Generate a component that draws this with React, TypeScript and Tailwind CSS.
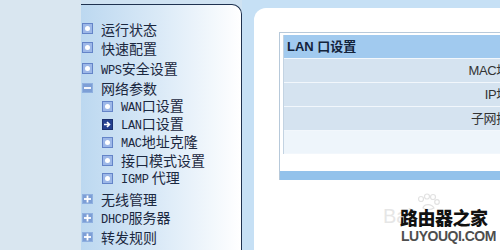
import React from 'react';

type Kind = 'dot' | 'minus' | 'plus' | 'arrow';

interface MenuItem {
  label: React.ReactNode;
  kind: Kind;
  sub?: boolean;
  gap?: boolean;
}

const Lat: React.FC<{ children: React.ReactNode }> = ({ children }) => (
  <span className="font-['Liberation_Mono',monospace] text-[12px] tracking-[-0.3px]">{children}</span>
);

const menu: MenuItem[] = [
  { label: '运行状态', kind: 'dot' },
  { label: '快速配置', kind: 'dot' },
  { label: <><Lat>WPS</Lat>安全设置</>, kind: 'dot', gap: true },
  { label: '网络参数', kind: 'minus' },
  { label: <><Lat>WAN</Lat>口设置</>, kind: 'dot', sub: true },
  { label: <><Lat>LAN</Lat>口设置</>, kind: 'arrow', sub: true },
  { label: <><Lat>MAC</Lat>地址克隆</>, kind: 'dot', sub: true },
  { label: '接口模式设置', kind: 'dot', sub: true },
  { label: <><Lat>IGMP</Lat>&nbsp;代理</>, kind: 'dot', sub: true },
  { label: '无线管理', kind: 'plus', gap: true },
  { label: <><Lat>DHCP</Lat>服务器</>, kind: 'plus' },
  { label: '转发规则', kind: 'plus' },
];

const MenuIcon: React.FC<{ kind: Kind }> = ({ kind }) => {
  if (kind === 'arrow') {
    return (
      <span className="w-[11px] h-[11px] shrink-0 bg-[#233f8f] border border-[#1a2f6e] flex items-center justify-center">
        <svg width="9" height="9" viewBox="0 0 9 9">
          <path d="M1 4.5h5.5M4 2l2.5 2.5L4 7" stroke="#fff" strokeWidth="1.6" fill="none" />
        </svg>
      </span>
    );
  }
  if (kind === 'minus' || kind === 'plus') {
    return (
      <span className="w-[11px] h-[10px] shrink-0 bg-[#7d9fd6] border border-[#8fb0e0] flex items-center justify-center">
        <svg width="9" height="8" viewBox="0 0 9 8">
          <path d="M1 4h7" stroke="#fff" strokeWidth="1.8" />
          {kind === 'plus' && <path d="M4.5 0.5v7" stroke="#fff" strokeWidth="1.8" />}
        </svg>
      </span>
    );
  }
  return (
    <span className="w-[11px] h-[11px] shrink-0 bg-[#9db8e8] border border-[#6484c8] flex items-center justify-center">
      <span className="w-[5px] h-[5px] rounded-full bg-white" />
    </span>
  );
};

const rows = ['MAC地址：', 'IP地址：', '子网掩码：'];

export default function App() {
  return (
    <div className="relative w-[500px] h-[250px] overflow-hidden flex bg-[#d9e6f0] font-['Noto_Sans_CJK_SC',sans-serif]">
      {/* left blank */}
      <div className="w-[81px] shrink-0" />

      {/* menu panel */}
      <div className="w-[161px] shrink-0 pt-[4px] bg-[#cfe2f2]">
        <div className="h-full border-t border-r border-[#1f3250] rounded-tr-[10px] bg-linear-to-r from-[#bcd8f0] via-[#dbeaf7] to-white pt-[14px]">
          {menu.map((m, i) => (
            <div
              key={i}
              className={`flex items-center text-[14px] leading-none text-[#1b2840] ${m.sub ? 'h-[18px] pl-[21px]' : 'h-[19px] pl-[1px]'} ${m.gap ? 'mt-[2px]' : ''}`}
            >
              <MenuIcon kind={m.kind} />
              <span className={`whitespace-nowrap ${m.sub ? 'ml-[8px]' : 'ml-[8px]'}`}>{m.label}</span>
            </div>
          ))}
        </div>
      </div>

      {/* right side */}
      <div className="flex-1 bg-[#c6e0f5] pt-[8px] pl-[12px] min-w-0">
        <div className="h-full bg-white rounded-tl-[12px] pt-[24px] pl-[25px] overflow-hidden">
          <div className="w-[420px] border-l border-t border-[#b7c9da]">
            <div className="pt-[2px] pl-[3px] pb-[17px]">
              <div className="border-l border-[#c3d3e2] text-[13px]">
                <div className="h-[23px] bg-[#a1caef] flex items-center pl-[3px] font-bold text-[#13233b] font-['Liberation_Sans','Noto_Sans_CJK_SC',sans-serif]">
                  LAN 口设置
                </div>
                {rows.map((r) => (
                  <div key={r} className="h-[24px] border-t border-[#f2f7fc] bg-[#d5e3f0] flex items-center">
                    <div className="w-[250px] text-right text-[#333] font-['Liberation_Sans','Noto_Sans_CJK_SC',sans-serif] tracking-[-0.4px] whitespace-nowrap">
                      {r}
                    </div>
                  </div>
                ))}
                <div className="h-[24px] border-t border-[#f2f7fc] bg-[#eef5fb] border-b border-[#c8d6e3]" />
              </div>
            </div>
            <div className="h-[9px] bg-[#93c2eb]" />
          </div>
        </div>
      </div>

      {/* watermark */}
      <div className="absolute left-[383px] top-[193px] w-[117px] h-[57px] pointer-events-none">
        <svg className="absolute left-[32px] top-[0px]" width="26" height="18" viewBox="0 0 26 18">
          <g fill="none" stroke="#e2e2e2" strokeWidth="1.2">
            <circle cx="6" cy="6" r="2.5" />
            <circle cx="12" cy="3.5" r="2.5" />
            <circle cx="18" cy="4" r="2.5" />
            <circle cx="22" cy="9" r="2.3" />
            <path d="M8 15c1-4 8-5 11 0c-3 2-8 2-11 0z" />
          </g>
        </svg>
        <span className="absolute left-[0px] top-[13px] text-[20px] leading-none text-[#e6e6e6] font-['Liberation_Sans',sans-serif]">Bai</span>
        <span className="absolute left-[17px] top-[15px] text-[18px] leading-none font-black text-[#111] tracking-[-0.5px] whitespace-nowrap">
          路由器之家
        </span>
        <span className="absolute left-[18px] top-[36px] text-[14px] leading-none font-black text-[#222] tracking-[-0.5px] whitespace-nowrap font-['Liberation_Sans',sans-serif] opacity-80">
          LUYOUQI.COM
        </span>
      </div>
    </div>
  );
}
